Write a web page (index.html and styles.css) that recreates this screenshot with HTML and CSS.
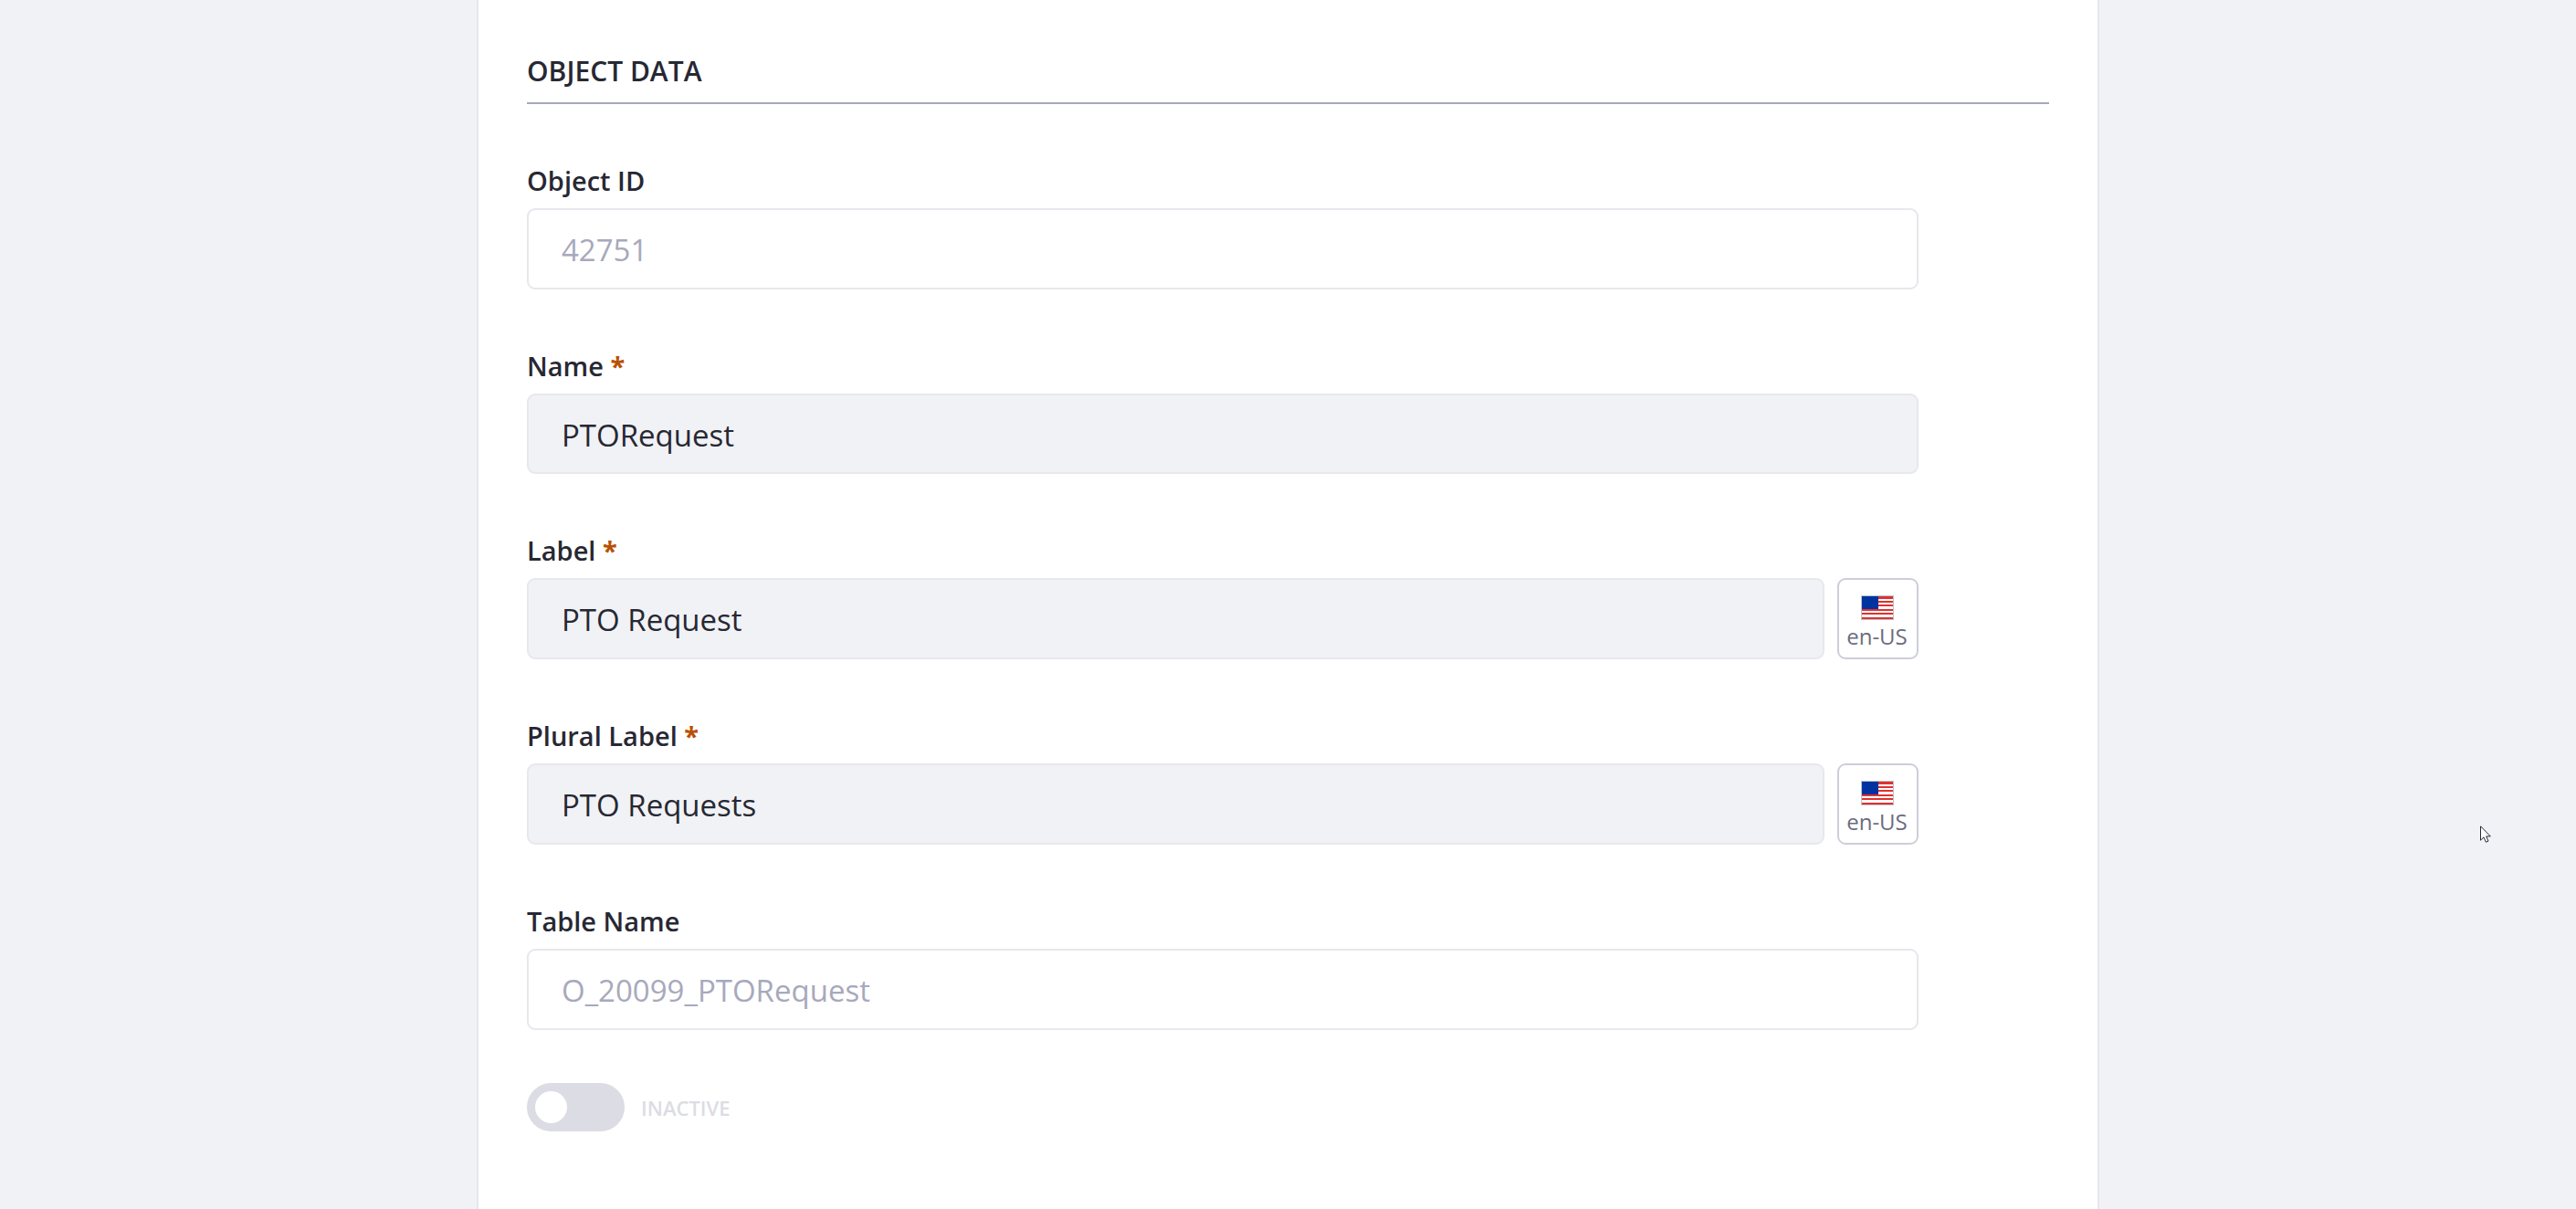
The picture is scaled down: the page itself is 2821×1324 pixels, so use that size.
FILE: index.html
```html
<!DOCTYPE html>
<html lang="en-US">
<head>
<meta charset="utf-8">
<meta name="viewport" content="width=device-width, initial-scale=1">
<title>Object Data</title>
<link rel="stylesheet" href="styles.css">
</head>
<body>
<svg class="defs" aria-hidden="true">
  <symbol id="flag-us" viewBox="0 0 36 27">
    <rect width="36" height="27" fill="#b9c3cc"/>
    <rect x="1" y="1" width="34" height="25" fill="#fff"/>
    <g fill="#e0312f">
      <rect x="1" y="1" width="34" height="3"/>
      <rect x="1" y="6" width="34" height="2"/>
      <rect x="1" y="10" width="34" height="2"/>
      <rect x="1" y="15" width="34" height="2"/>
      <rect x="1" y="19" width="34" height="2"/>
      <rect x="1" y="24" width="34" height="2"/>
    </g>
    <rect x="1" y="1" width="18" height="14" fill="#0033a0"/>
  </symbol>
</svg>
<main class="sheet">
  <form class="form">
    <h2 class="section-title">Object Data</h2>
    <div class="fields">
      <div class="field">
        <label class="label" for="object-id">Object ID</label>
        <input class="control control-plain" id="object-id" type="text" value="42751" readonly>
      </div>
      <div class="field">
        <label class="label" for="name">Name <span class="required">*</span></label>
        <input class="control" id="name" type="text" value="PTORequest">
      </div>
      <div class="field">
        <label class="label" for="label">Label <span class="required">*</span></label>
        <div class="control-group">
          <input class="control" id="label" type="text" value="PTO Request">
          <button class="locale" type="button"><svg class="flag" aria-hidden="true"><use href="#flag-us"/></svg>en-US</button>
        </div>
      </div>
      <div class="field">
        <label class="label" for="plural-label">Plural Label <span class="required">*</span></label>
        <div class="control-group">
          <input class="control" id="plural-label" type="text" value="PTO Requests">
          <button class="locale" type="button"><svg class="flag" aria-hidden="true"><use href="#flag-us"/></svg>en-US</button>
        </div>
      </div>
      <div class="field">
        <label class="label" for="table-name">Table Name</label>
        <input class="control control-plain" id="table-name" type="text" value="O_20099_PTORequest" readonly>
      </div>
    </div>
    <label class="toggle"><input class="switch" type="checkbox" role="switch" disabled>Inactive</label>
  </form>
</main>
<svg class="pointer" viewBox="0 0 12 19" aria-hidden="true">
  <path d="M.5.8V16.2L4 12.8L6.4 18.2L9 17.1L6.7 11.9H11.3Z" fill="#fff" stroke="#26263a"/>
</svg>
</body>
</html>
```
FILE: styles.css
```css
* {
  box-sizing: border-box;
}

body {
  margin: 0;
  background: #f1f2f5;
  color: #272833;
  font-family: "Open Sans", "Noto Sans", sans-serif;
}

.defs {
  display: none;
}

.sheet {
  max-width: 1777px;
  min-height: 100vh;
  margin: 0 auto;
  padding: 57px 53px;
  background: #fff;
  border: solid #e7e7ed;
  border-width: 0 2px;
}

.section-title {
  margin: 0 0 63px;
  padding-bottom: 13px;
  border-bottom: 2px solid #a7a9bc;
  font-size: 30px;
  font-weight: 600;
  line-height: 42px;
  text-transform: uppercase;
}

.fields {
  display: flex;
  flex-direction: column;
  gap: 63px;
  padding-right: 143px;
}

.label {
  display: block;
  margin-bottom: 9px;
  font-size: 29px;
  font-weight: 600;
  line-height: 42px;
}

.required {
  color: #b95000;
  font-weight: 700;
}

.control-group {
  display: flex;
  gap: 14px;
}

.control {
  display: block;
  width: 100%;
  min-width: 0;
  height: 88px;
  padding: 2px 36px 0;
  background: #f1f2f5;
  border: 2px solid #e7e7ed;
  border-radius: 9px;
  color: #272833;
  font: 33px "Open Sans", "Noto Sans", sans-serif;
}

.control-plain,
.control-group .control {
  height: 89px;
}

.control-plain {
  background: #fff;
  color: #a7a9bc;
}

.locale {
  display: flex;
  flex: 0 0 89px;
  flex-direction: column;
  align-items: center;
  gap: 2px;
  height: 89px;
  padding: 17px 2px 0 0;
  background: #fff;
  border: 2px solid #cdced9;
  border-radius: 9px;
  color: #6b6c7e;
  font: 24px/32px "Open Sans", "Noto Sans", sans-serif;
}

.flag {
  width: 36px;
  height: 27px;
}

.toggle {
  display: inline-flex;
  align-items: center;
  gap: 18px;
  margin-top: 58px;
  color: #dcdce4;
  font-size: 22px;
  font-weight: 600;
  line-height: 32px;
  text-transform: uppercase;
}

.switch {
  display: flex;
  align-items: center;
  width: 107px;
  height: 53px;
  margin: 0;
  padding: 0 9px;
  appearance: none;
  background: #dcdce4;
  border-radius: 27px;
}

.switch::before {
  width: 35px;
  height: 35px;
  background: #fff;
  border-radius: 50%;
  content: "";
}

/* Pointer floats above the page, in the right margin. */
.pointer {
  position: absolute;
  top: 904px;
  right: 93px;
  width: 12px;
  height: 19px;
}
```
